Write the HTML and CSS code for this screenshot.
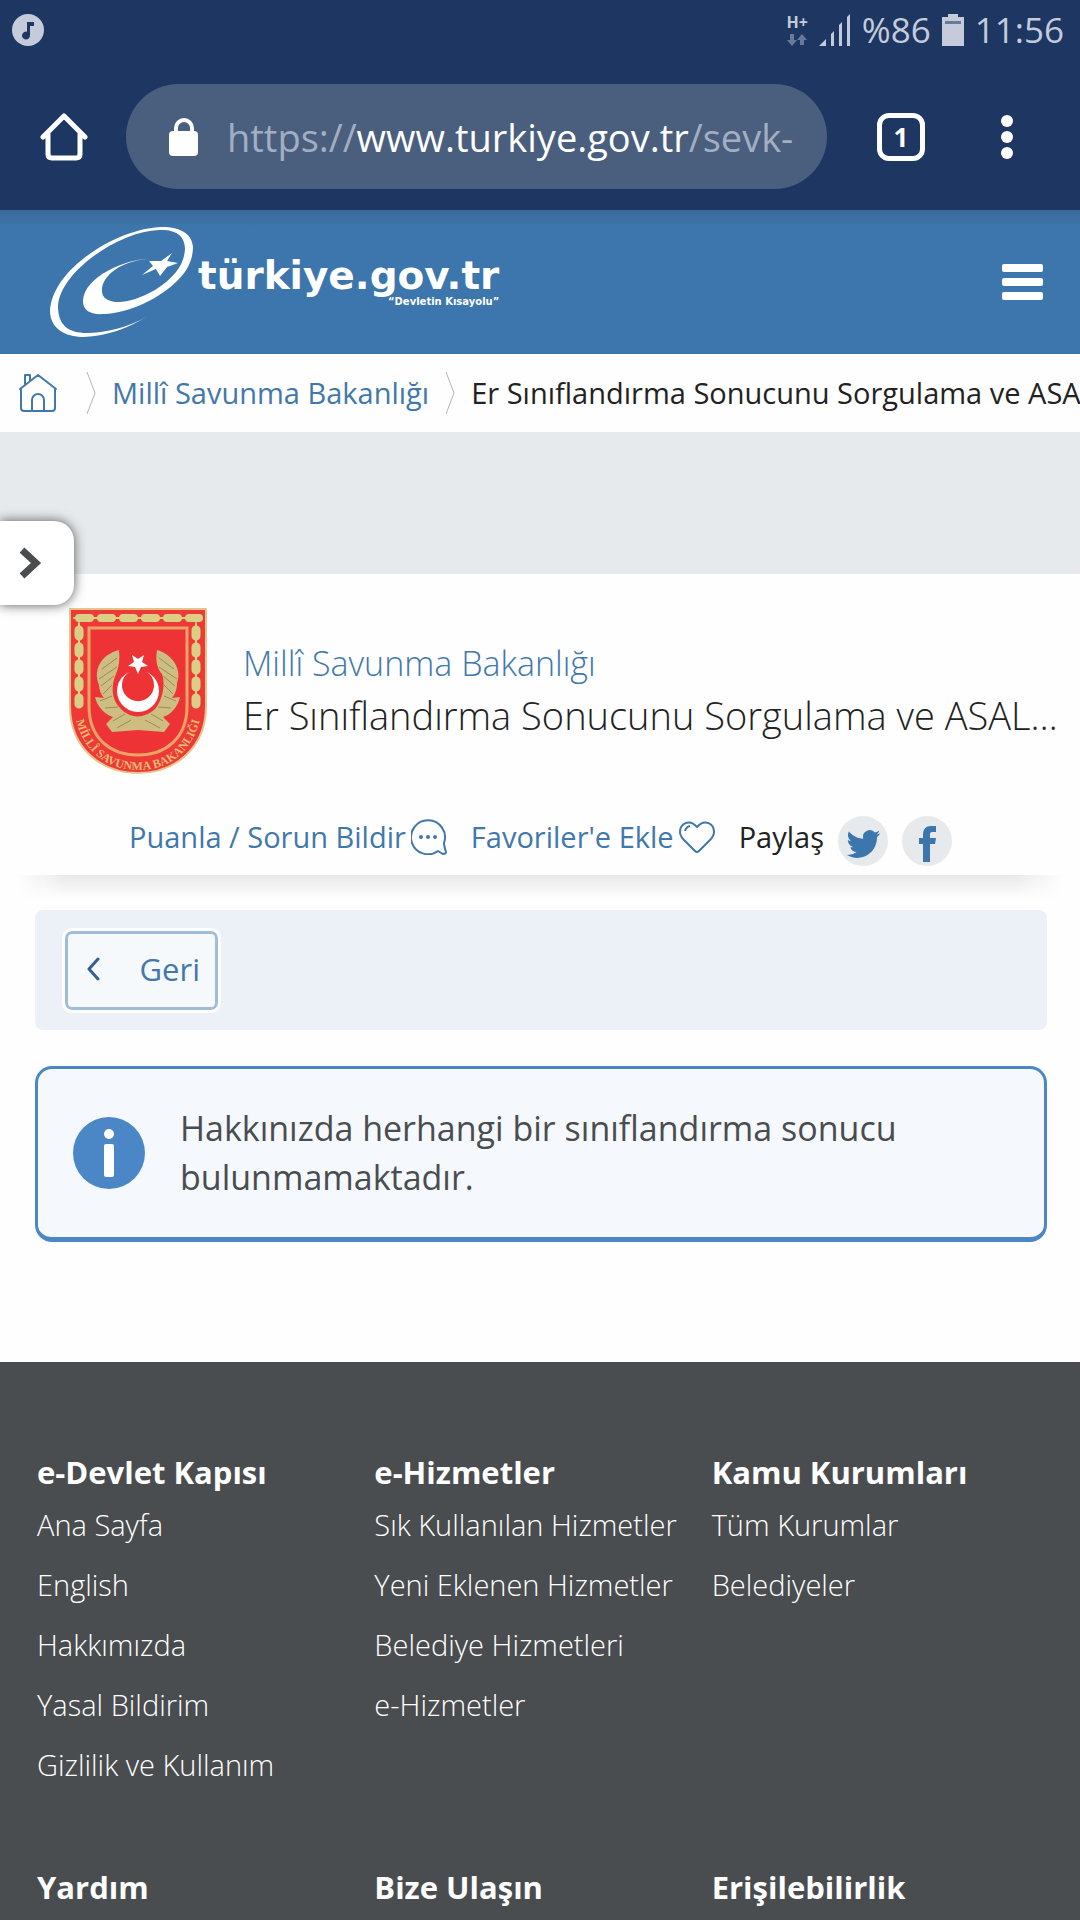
FILE: index.html
```html
<!DOCTYPE html>
<html lang="tr">
<head>
<meta charset="utf-8">
<meta name="viewport" content="width=device-width, initial-scale=1">
<title>Er Sınıflandırma Sonucunu Sorgulama</title>
<link rel="stylesheet" href="styles.css">
</head>
<body>
<div class="browser">
  <div class="status">
    <svg class="status-music" viewBox="0 0 32 32" width="32" height="32" aria-hidden="true"><circle cx="16" cy="16" r="16" fill="#c5cbda"/><path d="M15 8h7v4h-4v9.500a4 4 0 1 1-3-3.800z" fill="#1d3762"/></svg>
    <div class="network"><span>H+</span>
      <svg viewBox="0 0 20 12" width="20" height="12" aria-hidden="true"><path d="M3 0h4v6h3l-5 6-5-6h3zM13 11V6h-3l5-6 5 6h-3v5z" fill="#687a9c"/></svg>
    </div>
    <svg viewBox="0 0 32 32" width="32" height="32" aria-hidden="true"><path d="M0 32l7-7v7zM12 32V20l3-3v15zM20 32V11l3-3v24zM28 32V3l3-3v32z" fill="#c5cbda"/></svg>
    <span class="status-text">%86</span>
    <svg viewBox="0 0 22 32" width="22" height="32" aria-hidden="true"><path d="M6 0h10v3h6v29H0V3h6z" fill="#c5cbda"/><path d="M3 7h16v3H3z" fill="#687a9c"/></svg>
    <span class="status-text">11:56</span>
  </div>
  <div class="toolbar">
    <button class="icon-button" aria-label="Ana sayfa"><svg viewBox="0 0 48 48" width="48" height="48"><path d="M3 24L24 3l21 21M8 21v20q0 4 4 4h24q4 0 4-4V21" fill="none" stroke="#fff" stroke-width="5" stroke-linecap="round" stroke-linejoin="round"/></svg></button>
    <button class="address">
      <svg viewBox="0 0 30 38" width="30" height="38" aria-hidden="true"><path d="M7 15V10a8 8 0 0 1 16 0v5" fill="none" stroke="#fff" stroke-width="4"/><rect y="13" width="29" height="25" rx="4" fill="#fff"/></svg>
      <span class="url">https://<b>www.turkiye.gov.tr</b>/sevk-</span>
    </button>
    <button class="tabs" aria-label="Sekmeler">1</button>
    <button class="icon-button" aria-label="Menü"><svg viewBox="0 0 12 44" width="12" height="44"><g fill="#fff"><circle cx="6" cy="6" r="6"/><circle cx="6" cy="22" r="6"/><circle cx="6" cy="38" r="6"/></g></svg></button>
  </div>
</div>

<header class="site-header">
  <a class="logo" href="#">
    <svg viewBox="0 0 144 111" width="144" height="111" aria-hidden="true"><path fill="#fff" d="M98 32C77 32 34 49 33 74C33 84 41 88 54 87C80 86 111 71 129 52C140 41 143 29 143 20C142 7 131 0 112 0C68 1 1 42 0 85C1 101 14 110 34 110C58 109 78 101 98 89C77 101 54 106 37 106C18 106 8 98 8 79C10 45 69 4 109 3C127 2 135 10 135 22C134 38 125 50 105 63C91 71 78 75 69 75C57 75 51 70 52 62C53 49 70 34 98 32Z"/><path fill="#fff" d="M122 26L117 34L128 36L117 40L110 49L106 42L92 48L103 39L99 34L111 34Z"/></svg>
    <span class="wordmark"><span class="wordmark-name">türkiye.gov.tr</span><span class="wordmark-tag">“Devletin Kısayolu”</span></span>
  </a>
  <button class="menu" aria-label="Menü"><span></span><span></span><span></span></button>
</header>

<nav class="breadcrumb" aria-label="Konum">
  <a href="#" aria-label="Ana Sayfa"><svg viewBox="0 0 40 40" width="40" height="40"><path d="M2 16L20 2l18 14M3 15v20q0 3 3 3h28q3 0 3-3V15M14 38V27a6 6 0 0 1 12 0v11M7 11V2h5v6" fill="none" stroke="#4178ab" stroke-width="2" stroke-linecap="round" stroke-linejoin="round"/></svg></a>
  <svg class="separator" viewBox="0 0 10 42" width="10" height="42" aria-hidden="true"><path d="M1 0l8 21-8 21" fill="none" stroke="#b4b4b4"/></svg>
  <a href="#">Millî Savunma Bakanlığı</a>
  <svg class="separator" viewBox="0 0 10 42" width="10" height="42" aria-hidden="true"><path d="M1 0l8 21-8 21" fill="none" stroke="#b4b4b4"/></svg>
  <span>Er Sınıflandırma Sonucunu Sorgulama ve ASA</span>
</nav>

<div class="band">
  <button class="drawer" aria-label="Yan menüyü aç"><svg viewBox="0 0 22 32" width="22" height="32"><path d="M2 3l14 13L2 29" fill="none" stroke="#4a4d50" stroke-width="7"/></svg></button>
</div>

<main>
  <section class="service">
    <div class="service-head">
      <svg class="crest" viewBox="0 0 138 168" width="138" height="168" role="img" aria-label="Millî Savunma Bakanlığı">
        <defs><path id="crest-arc" d="M5 100C9 140 34 163 69 163S129 140 133 100"/></defs>
        <path d="M1 2h136v97c0 42-31 67-68 67S1 141 1 99z" fill="#ed3a37" stroke="#e6c58c" stroke-width="2"/>
        <path d="M20 21h98v78c0 33-22 49-49 49S20 132 20 99z" fill="#ee3336" stroke="#eba366" stroke-width="3"/>
        <g fill="none" stroke="#dbcf85" stroke-linecap="round"><path d="M5 11h128M10 16v82M127 16v82" stroke-width="2"/><path d="M10 11h120" stroke-width="8" stroke-dasharray="11 11"/><path d="M10 23v74M127 23v74" stroke-width="9" stroke-dasharray="6 11"/></g>
        <g fill="#cdbd80"><path d="M50 43C31 48 24 64 30 78C30 83 33 89 35 91L26 90C28 99 35 107 44 110L37 117L43 125L69 123L95 125L101 117L94 110C103 107 109 99 111 90L103 91C107 86 108 81 108 76C113 64 105 48 88 43C86 55 89 63 93 67C97 78 93 94 86 102C75 112 61 112 51 101C42 92 42 78 47 67C50 60 51 52 50 43Z"/></g>
        <path d="M48 51L33 62M48 60L30 72M45 69L32 79M43 78L34 87M43 89L31 94M49 100L36 101M56 107L44 114M90 51L105 62M90 60L108 72M94 69L106 79M95 78L104 87M95 89L107 94M89 100L102 101M82 107L94 114M62 113L48 121M76 113L91 121" stroke="#998a5f" stroke-width="1"/>
        <path d="M60 65A21 21 0 1 0 78 65A16 16 0 1 1 60 65Z" fill="#fff"/>
        <path d="M69 67L66 60L59 59L65 55L63 48L69 52L75 48L73 55L79 59L72 60Z" fill="#fff"/>
        <text class="crest-text"><textPath href="#crest-arc" startOffset="50%" text-anchor="middle">MİLLÎ SAVUNMA BAKANLIĞI</textPath></text>
      </svg>
      <div class="titles">
        <a class="ministry" href="#">Millî Savunma Bakanlığı</a>
        <h1>Er Sınıflandırma Sonucunu Sorgulama ve ASAL…</h1>
      </div>
    </div>
    <div class="actions">
      <a href="#">Puanla / Sorun Bildir<svg viewBox="0 0 36 36" width="36" height="36" aria-hidden="true"><path d="M27 32A17 17 0 1 1 33 24C33 27 34 30 35 33Q35 35 32 35Q30 34 27 32Z" fill="none" stroke="#4178ab" stroke-width="2" stroke-linejoin="round"/><g fill="#4178ab"><circle cx="10" cy="18" r="2"/><circle cx="17" cy="18" r="2"/><circle cx="24" cy="18" r="2"/></g></svg></a>
      <a href="#">Favoriler'e Ekle<svg viewBox="0 0 36 36" width="36" height="36" aria-hidden="true"><path d="M18 8C10-1 1 5 1 13c0 4 2 6 4 8l11 11q2 2 4 0l11-11c2-2 4-4 4-8C35 5 26-1 18 8zM6 12q1-4 5-5" fill="none" stroke="#4178ab" stroke-width="2" stroke-linejoin="round"/></svg></a>
      <div class="share">Paylaş
        <a class="social" href="#" aria-label="Twitter"><svg viewBox="0 0 24 24" width="36" height="36"><path fill="#3c76ad" d="M23.500 4.900c-.8.400-1.700.6-2.600.8.900-.6 1.700-1.500 2-2.500-.9.500-1.900.9-2.900 1.100a4.600 4.600 0 0 0-7.900 4.200C8.300 8.300 4.900 6.500 2.600 3.700c-1.200 2.100-.6 4.900 1.400 6.200-.8 0-1.500-.2-2.100-.6 0 2.300 1.600 4.200 3.700 4.700-.7.200-1.400.2-2.100.1.600 1.800 2.300 3.200 4.300 3.200A9.300 9.300 0 0 1 1 19.200c2.100 1.300 4.500 2.100 7.100 2.100 8.600 0 13.500-7.300 13.200-13.900.9-.7 1.700-1.500 2.200-2.500z"/></svg></a>
        <a class="social" href="#" aria-label="Facebook"><svg viewBox="0 0 36 36" width="36" height="36"><path fill="#3c76ad" d="M14 36V18h-4v-6h4V9c0-6 3-9 8-9h5v6h-3c-3 0-3 1-3 3v3h6l-1 6h-5v18z"/></svg></a>
      </div>
    </div>
  </section>

  <div class="back-bar">
    <button class="back"><svg viewBox="0 0 14 24" width="14" height="24" aria-hidden="true"><path d="M12 2L3 12l9 10" fill="none" stroke="#33608f" stroke-width="3" stroke-linecap="round" stroke-linejoin="round"/></svg>Geri</button>
  </div>

  <div class="notice" role="status">
    <svg viewBox="0 0 72 72" width="72" height="72" aria-hidden="true"><circle cx="36" cy="36" r="36" fill="#4b86c7"/><circle cx="36" cy="17" r="5" fill="#fff"/><rect x="31" y="27" width="10" height="33" rx="2" fill="#fff"/></svg>
    <p>Hakkınızda herhangi bir sınıflandırma sonucu bulunmamaktadır.</p>
  </div>
</main>

<footer>
  <section><h2>e-Devlet Kapısı</h2><ul><li><a href="#">Ana Sayfa</a></li><li><a href="#">English</a></li><li><a href="#">Hakkımızda</a></li><li><a href="#">Yasal Bildirim</a></li><li><a href="#">Gizlilik ve Kullanım</a></li></ul></section>
  <section><h2>e-Hizmetler</h2><ul><li><a href="#">Sık Kullanılan Hizmetler</a></li><li><a href="#">Yeni Eklenen Hizmetler</a></li><li><a href="#">Belediye Hizmetleri</a></li><li><a href="#">e-Hizmetler</a></li></ul></section>
  <section><h2>Kamu Kurumları</h2><ul><li><a href="#">Tüm Kurumlar</a></li><li><a href="#">Belediyeler</a></li></ul></section>
  <section><h2>Yardım</h2></section>
  <section><h2>Bize Ulaşın</h2></section>
  <section><h2>Erişilebilirlik</h2></section>
</footer>
</body>
</html>
```
FILE: styles.css
```css
* { box-sizing: border-box; }
body {
  margin: 0;
  background: #fefefe;
  color: #222;
  font-family: "Open Sans", "Noto Sans", sans-serif;
  font-size: 29px;
  line-height: 42px;
}
a { color: #4178ab; text-decoration: none; }
button { margin: 0; padding: 0; border: 0; background: none; color: inherit; font: inherit; }
svg { display: block; flex: none; }
h1, h2, p, ul { margin: 0; padding: 0; }
ul { list-style: none; }

/* Browser chrome */
.browser { background: #1d3762; color: #fff; }
.status { display: flex; align-items: center; gap: 11px; height: 60px; padding: 0 16px 0 12px; color: #c5cbda; }
.status-music { margin-right: auto; }
.network { display: flex; flex-direction: column; align-items: center; gap: 4px; font-size: 16px; font-weight: 700; line-height: 16px; }
.status-text { font-size: 35px; }
.toolbar { display: flex; align-items: center; justify-content: space-between; padding: 24px 67px 21px 40px; }
.icon-button { display: flex; }
.address { display: flex; flex: 1; align-items: center; gap: 28px; height: 105px; margin: 0 50px 0 38px; padding: 0 20px 0 43px; border-radius: 53px; background: #4a5e7e; overflow: hidden; }
.url { color: #a2aec2; font-size: 38px; white-space: nowrap; }
.url b { color: #fff; font-weight: 400; }
.tabs { width: 48px; height: 48px; margin-right: 76px; border: 5px solid #fff; border-radius: 12px; font-size: 26px; font-weight: 700; line-height: 36px; }

/* Site header */
.site-header { display: flex; align-items: center; justify-content: space-between; height: 144px; padding: 0 37px 0 50px; background: linear-gradient(#3a6b98, #3c76ad 16px); }
.logo { display: flex; align-items: center; gap: 4px; color: #fff; }
.wordmark { display: flex; flex-direction: column; align-items: flex-end; font-family: "DejaVu Sans", sans-serif; font-weight: 700; }
.wordmark-name { font-size: 39px; line-height: 40px; }
.wordmark-tag { font-size: 10px; line-height: 12px; }
.menu { display: flex; flex-direction: column; gap: 6px; width: 41px; }
.menu span { height: 8px; border-radius: 2px; background: #fff; }

.breadcrumb { display: flex; align-items: center; gap: 16px; height: 78px; padding-left: 18px; overflow: hidden; white-space: nowrap; }
.breadcrumb .separator:nth-child(2) { margin-left: 12px; }

.band { position: relative; z-index: 1; height: 142px; background: #e6eaed; }
.drawer { position: absolute; left: 0; bottom: -31px; display: flex; align-items: center; width: 74px; height: 84px; padding-left: 20px; border-radius: 0 20px 20px 0; background: #fff; box-shadow: 0 0 12px #555; }

/* Service heading */
.service { position: relative; padding: 33px 12px 9px 69px; }
.service::after {
  content: "";
  position: absolute;
  top: 100%;
  left: 16px;
  right: 16px;
  height: 24px;
  background: linear-gradient(#e8e8e8, #fefefe);
  mask-image: linear-gradient(90deg, transparent, #000 50px, #000 calc(100% - 50px), transparent);
}
.service-head { display: flex; gap: 36px; }
.crest-text { fill: #efb872; font: 700 12px "Liberation Serif", serif; }
.titles { flex: 1; min-width: 0; padding-top: 32px; }
.ministry { display: block; font-size: 34px; font-weight: 300; line-height: 48px; }
h1 { overflow: hidden; font-size: 38px; font-weight: 300; line-height: 56px; text-overflow: ellipsis; white-space: nowrap; }
.actions { display: flex; align-items: flex-start; gap: 24px; margin-top: 41px; padding-left: 60px; white-space: nowrap; }
.actions > a { display: flex; align-items: center; gap: 5px; }
.share { display: flex; align-items: flex-start; gap: 14px; }
.social { display: flex; align-items: center; justify-content: center; width: 50px; height: 50px; padding-top: 6px; border-radius: 50%; background: #e6eaed; }

/* Page content */
.back-bar { margin: 35px 33px 36px 35px; padding: 21px 30px 20px; border-radius: 8px; background: #ecf1f8; }
.back { display: flex; align-items: center; justify-content: space-between; width: 153px; height: 79px; padding: 0 15px 4px 18px; border: 3px solid #9fbcd8; border-radius: 7px; outline: 3px solid #fff; background: #f5f9fc; color: #4178ab; font-size: 31px; }
.notice { display: flex; align-items: center; gap: 35px; margin: 0 33px 120px 35px; padding: 35px; border: 3px solid #4b86c7; border-bottom-width: 5px; border-radius: 17px; background: #f5f9fd; color: #4a4d50; }
.notice p { font-size: 34px; line-height: 49px; }

footer { display: grid; grid-template-columns: repeat(3, 1fr); row-gap: 70px; padding: 88px 31px 10px 37px; background: #4a4d50; color: #fff; }
footer h2 { font-size: 31px; line-height: 45px; }
footer li { height: 60px; line-height: 60px; font-weight: 300; }
footer a { color: #fff; }
```
